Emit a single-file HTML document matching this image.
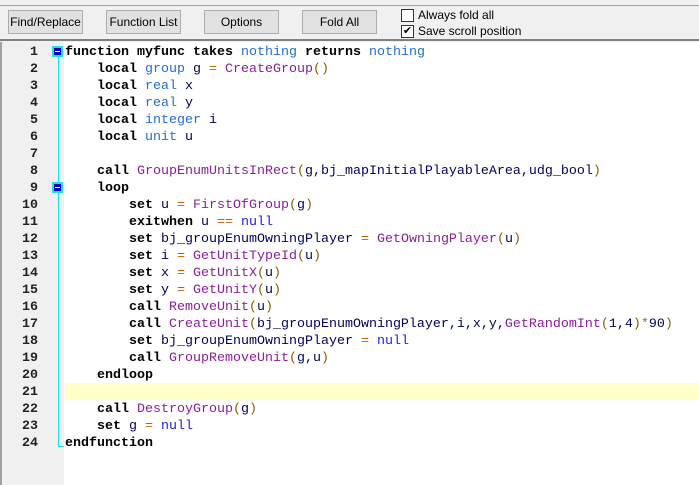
<!DOCTYPE html>
<html><head><style>
*{margin:0;padding:0;box-sizing:border-box}
body{width:699px;height:485px;background:#f0f0f0;position:relative;overflow:hidden;font-family:"Liberation Sans",sans-serif}
.top{position:absolute;left:0;top:0;width:699px;height:6px;background:#f0f0f0;border-bottom:1px solid #a0a0a0}
.bar{position:absolute;left:0;top:6px;width:699px;height:35px;background:#f0f0f0;border-bottom:2px solid #808080}
.btn{position:absolute;top:10px;height:24px;width:75px;background:#e1e1e1;border:1px solid #adadad;font-size:12px;text-align:center;line-height:22px;color:#000}
.cb{position:absolute;left:401px;width:13px;height:13px;background:#fff;border:1px solid #333}
.cbl{position:absolute;left:418px;font-size:12px;color:#000}
.ed{position:absolute;left:0;top:42px;width:699px;height:443px;background:#fff}
.gut{position:absolute;left:0;top:42px;width:64px;height:443px;background:#f0f0f0;border-left:2px solid #a0a0a0}
.hl{position:absolute;left:65px;top:383px;width:634px;height:17px;background:#ffffc8}
.code{position:absolute;left:65px;top:44px;font-family:"Liberation Mono",monospace;font-size:13.33px;line-height:17px;white-space:pre;font-weight:bold;color:#000}
.nums{position:absolute;left:0;top:44px;width:38px;text-align:right;font-family:"Liberation Mono",monospace;font-size:13.33px;line-height:17px;white-space:pre;font-weight:bold;color:#222}
.t{color:#1f6fcf;font-weight:normal}.f{color:#8c1c9c;font-weight:normal}.o{color:#c06000;font-weight:normal}.p{color:#8a5a00;font-weight:normal}.v{color:#000060;font-weight:normal}.n{color:#2020e0;font-weight:normal}
.vl{position:absolute;left:58px;width:1px;background:#20e0f0}
.fold{position:absolute;left:52px;width:11px;height:11px;background:#0000c0;border:2px solid #20e0f0}
.fold:after{content:"";position:absolute;left:1px;top:3px;width:5px;height:1px;background:#fff}
</style></head><body>
<div class="top"></div>
<div class="bar"></div>
<div class="btn" style="left:8px">Find/Replace</div>
<div class="btn" style="left:106px">Function List</div>
<div class="btn" style="left:204px">Options</div>
<div class="btn" style="left:302px">Fold All</div>
<div class="cb" style="top:9px"></div><div class="cbl" style="top:8px">Always fold all</div>
<div class="cb" style="top:25px;font-size:11px;line-height:10px;text-align:center">✔</div><div class="cbl" style="top:24px">Save scroll position</div>
<div class="ed"></div>
<div class="gut"></div>
<div class="hl"></div>
<div class="vl" style="top:50px;height:397px"></div>
<div class="vl" style="top:446px;width:6px;height:1px"></div>
<div class="fold" style="top:46px"></div>
<div class="fold" style="top:182px"></div>
<div class="nums">1
2
3
4
5
6
7
8
9
10
11
12
13
14
15
16
17
18
19
20
21
22
23
24</div>
<div class="code">function myfunc takes <span class="t">nothing</span> returns <span class="t">nothing</span>
    local <span class="t">group</span> <span class="v">g</span> <span class="o">=</span> <span class="f">CreateGroup</span><span class="p">()</span>
    local <span class="t">real</span> <span class="v">x</span>
    local <span class="t">real</span> <span class="v">y</span>
    local <span class="t">integer</span> <span class="v">i</span>
    local <span class="t">unit</span> <span class="v">u</span>

    call <span class="f">GroupEnumUnitsInRect</span><span class="p">(</span><span class="v">g,bj_mapInitialPlayableArea,udg_bool</span><span class="p">)</span>
    loop
        set <span class="v">u</span> <span class="o">=</span> <span class="f">FirstOfGroup</span><span class="p">(</span><span class="v">g</span><span class="p">)</span>
        exitwhen <span class="v">u</span> <span class="o">==</span> <span class="n">null</span>
        set <span class="v">bj_groupEnumOwningPlayer</span> <span class="o">=</span> <span class="f">GetOwningPlayer</span><span class="p">(</span><span class="v">u</span><span class="p">)</span>
        set <span class="v">i</span> <span class="o">=</span> <span class="f">GetUnitTypeId</span><span class="p">(</span><span class="v">u</span><span class="p">)</span>
        set <span class="v">x</span> <span class="o">=</span> <span class="f">GetUnitX</span><span class="p">(</span><span class="v">u</span><span class="p">)</span>
        set <span class="v">y</span> <span class="o">=</span> <span class="f">GetUnitY</span><span class="p">(</span><span class="v">u</span><span class="p">)</span>
        call <span class="f">RemoveUnit</span><span class="p">(</span><span class="v">u</span><span class="p">)</span>
        call <span class="f">CreateUnit</span><span class="p">(</span><span class="v">bj_groupEnumOwningPlayer,i,x,y,</span><span class="f">GetRandomInt</span><span class="p">(</span><span class="v">1,4</span><span class="p">)</span><span class="o">*</span><span class="v">90</span><span class="p">)</span>
        set <span class="v">bj_groupEnumOwningPlayer</span> <span class="o">=</span> <span class="n">null</span>
        call <span class="f">GroupRemoveUnit</span><span class="p">(</span><span class="v">g,u</span><span class="p">)</span>
    endloop

    call <span class="f">DestroyGroup</span><span class="p">(</span><span class="v">g</span><span class="p">)</span>
    set <span class="v">g</span> <span class="o">=</span> <span class="n">null</span>
endfunction</div>
</body></html>
